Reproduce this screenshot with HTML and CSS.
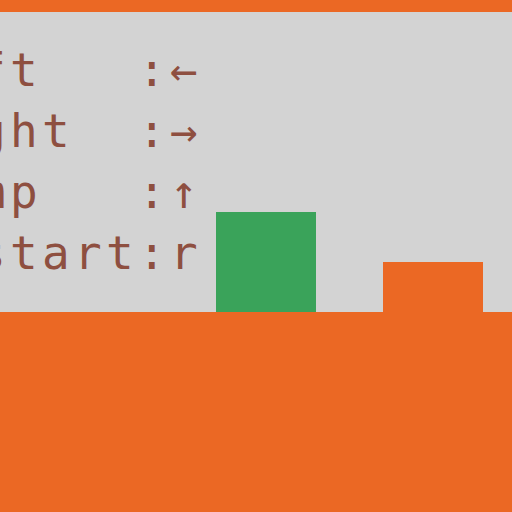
FILE: index.html
```html
<!DOCTYPE html>
<html>
<head>
<meta charset="utf-8">
<link rel="stylesheet" href="styles.css">
</head>
<body>
<div class="topbar"></div>
<div class="stage">
  <div class="help">
    <div class="line">left   :←</div>
    <div class="line">right  :→</div>
    <div class="line">jump   :↑</div>
    <div class="line">restart:r</div>
  </div>
  <div class="player"></div>
  <div class="box"></div>
</div>
<div class="floor"></div>
</body>
</html>
```
FILE: styles.css
```css
html, body {
  margin: 0;
  padding: 0;
  width: 512px;
  height: 512px;
  overflow: hidden;
  background: #d3d3d3;
}
.topbar {
  height: 12px;
  background: #eb6824;
}
.stage {
  height: 300px;
  display: flex;
  align-items: flex-end;
  background: #d3d3d3;
}
.help {
  align-self: flex-start;
  width: 216px;
  flex: none;
  padding-top: 28px;
  font-family: "DejaVu Sans Mono", monospace;
  font-size: 46px;
  line-height: 61px;
  letter-spacing: 4.3px;
  color: #8e4f40;
}
.line {
  margin-left: -86px;
  white-space: pre;
}
.player {
  flex: none;
  width: 100px;
  height: 100px;
  background: #3aa35a;
}
.box {
  flex: none;
  width: 100px;
  height: 50px;
  margin-left: 67px;
  background: #eb6824;
}
.floor {
  height: 200px;
  background: #eb6824;
}
```
